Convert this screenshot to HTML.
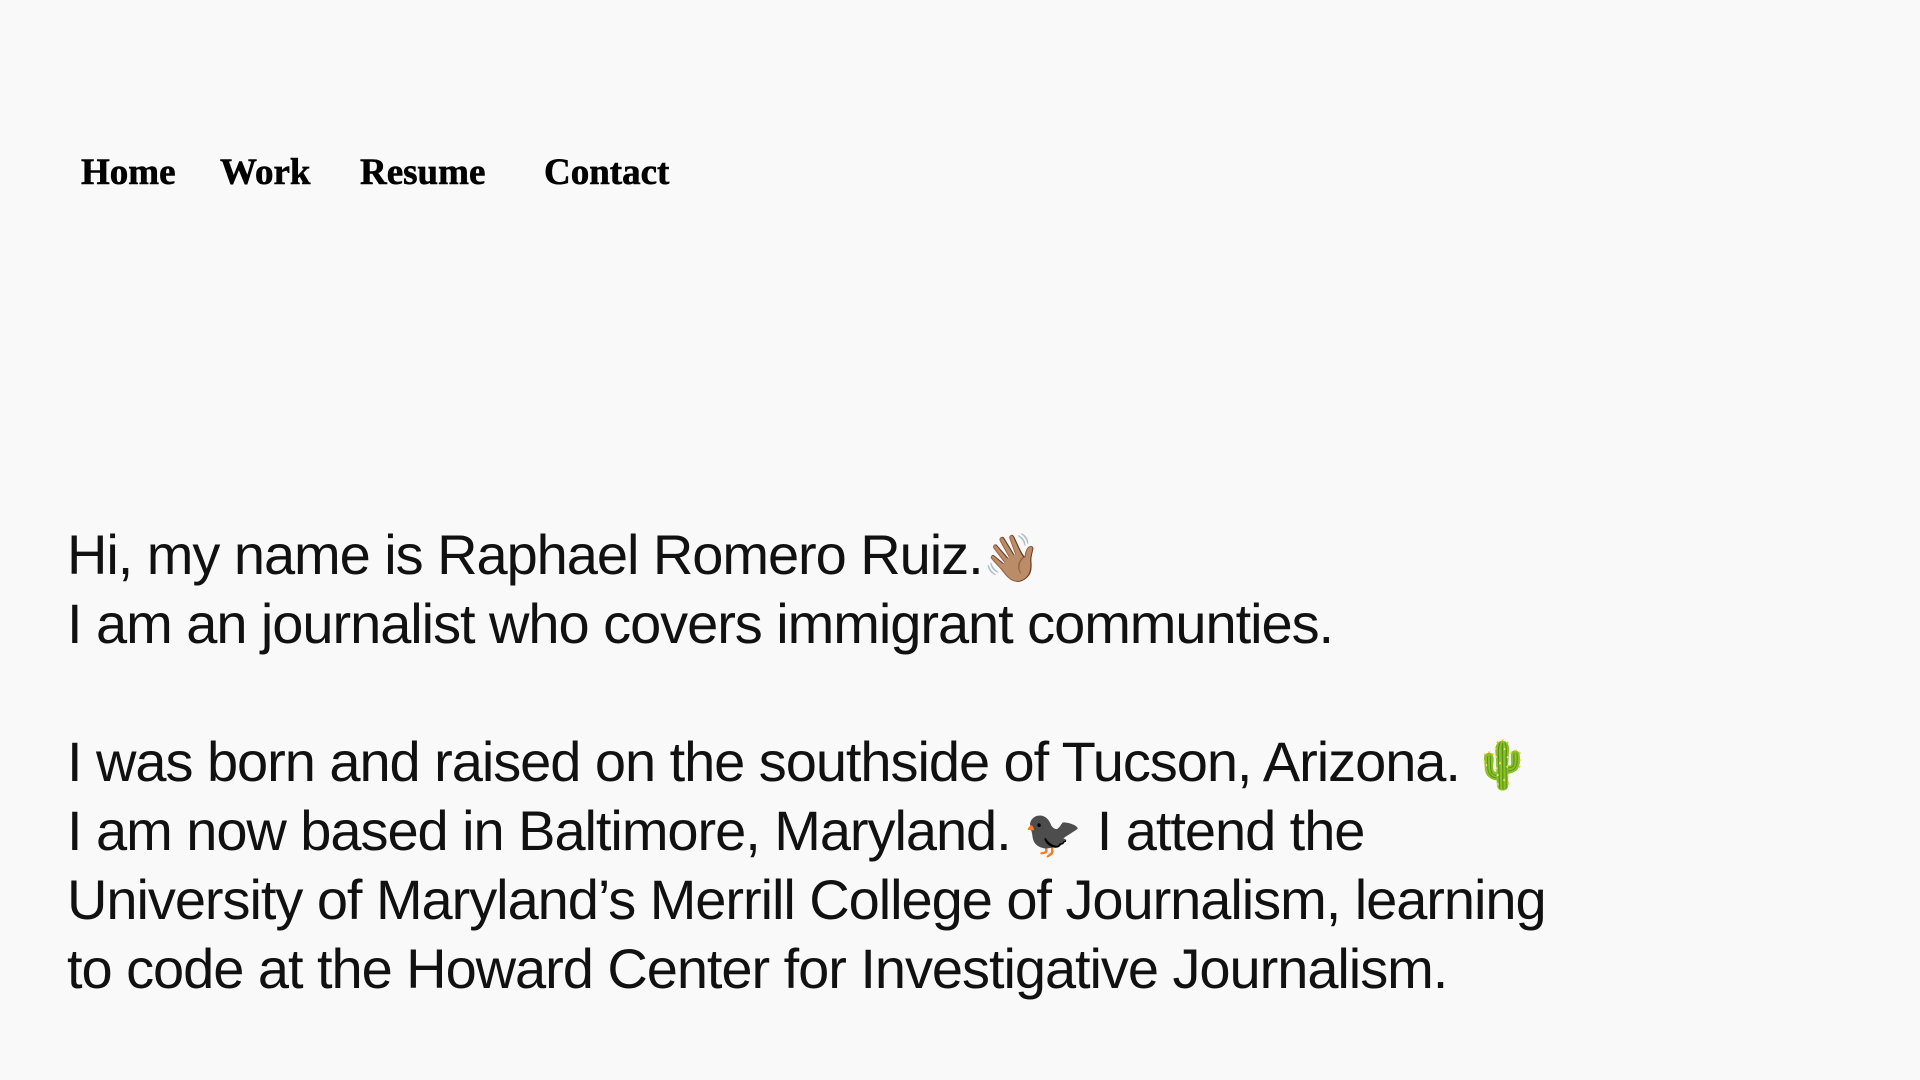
<!DOCTYPE html>
<html><head><meta charset="utf-8"><style>
html,body{margin:0;background:#f9f9f9;width:1920px;height:1080px;overflow:hidden}
nav{position:absolute;top:151px;left:0;font-family:"Liberation Serif",serif;font-weight:bold;font-size:37px;color:#000;-webkit-text-stroke:0.6px #000}
nav span{position:absolute;top:0;white-space:nowrap}
.t{position:absolute;left:67px;top:520px;font-family:"Liberation Sans",sans-serif;font-size:56px;line-height:69px;color:#111;letter-spacing:-1.05px;white-space:nowrap}
.e{font-size:47px;letter-spacing:0;line-height:0}
</style></head><body>
<nav><span style="left:81px">Home</span><span style="left:220px">Work</span><span style="left:360px">Resume</span><span style="left:544px">Contact</span></nav>
<div class="t">Hi, my name is Raphael Romero Ruiz.<span class="e">👋🏽</span><br>I am an journalist who covers immigrant communties.<br><br>I was born and raised on the southside of Tucson, Arizona.<span class="e"> 🌵</span><br>I am now based in Baltimore, Maryland.<span class="e"> 🐦‍⬛</span> I attend the<br>University of Maryland’s Merrill College of Journalism, learning<br>to code at the Howard Center for Investigative Journalism.</div>
</body></html>
